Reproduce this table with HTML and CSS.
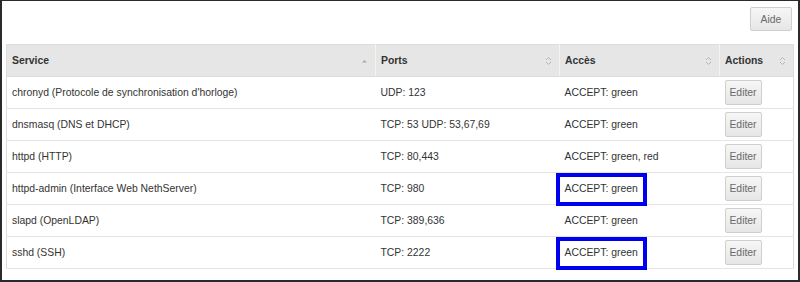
FILE: index.html
```html
<!DOCTYPE html>
<html lang="fr">
<head>
<meta charset="utf-8">
<title>Services réseau</title>
<link rel="stylesheet" href="styles.css">
</head>
<body>
<div class="frame">
  <div class="toolbar">
    <button class="btn btn-help">Aide</button>
  </div>
  <table class="grid">
    <colgroup>
      <col class="c-service">
      <col class="c-ports">
      <col class="c-acces">
      <col class="c-actions">
    </colgroup>
    <thead>
      <tr>
        <th><div class="th-in"><span>Service</span>
          <svg class="sort" width="7" height="10" viewBox="0 0 7 10"><path d="M1 6.5 L3.5 4 L6 6.5 Z" fill="#a8a8a8"/></svg></div></th>
        <th><div class="th-in"><span>Ports</span>
          <svg class="sort" width="7" height="10" viewBox="0 0 7 10"><path d="M1 4 L3.5 1.5 L6 4 M1 6 L3.5 8.5 L6 6" fill="none" stroke="#b4b4b4" stroke-width="1"/></svg></div></th>
        <th><div class="th-in"><span>Accès</span>
          <svg class="sort" width="7" height="10" viewBox="0 0 7 10"><path d="M1 4 L3.5 1.5 L6 4 M1 6 L3.5 8.5 L6 6" fill="none" stroke="#b4b4b4" stroke-width="1"/></svg></div></th>
        <th><div class="th-in"><span>Actions</span>
          <svg class="sort" width="7" height="10" viewBox="0 0 7 10"><path d="M1 4 L3.5 1.5 L6 4 M1 6 L3.5 8.5 L6 6" fill="none" stroke="#b4b4b4" stroke-width="1"/></svg></div></th>
      </tr>
    </thead>
    <tbody>
      <tr>
        <td>chronyd (Protocole de synchronisation d'horloge)</td>
        <td>UDP: 123</td>
        <td>ACCEPT: green</td>
        <td class="act"><button class="btn btn-edit">Editer</button></td>
      </tr>
      <tr>
        <td>dnsmasq (DNS et DHCP)</td>
        <td>TCP: 53 UDP: 53,67,69</td>
        <td>ACCEPT: green</td>
        <td class="act"><button class="btn btn-edit">Editer</button></td>
      </tr>
      <tr>
        <td>httpd (HTTP)</td>
        <td>TCP: 80,443</td>
        <td>ACCEPT: green, red</td>
        <td class="act"><button class="btn btn-edit">Editer</button></td>
      </tr>
      <tr>
        <td>httpd-admin (Interface Web NethServer)</td>
        <td>TCP: 980</td>
        <td><span class="mark">ACCEPT: green</span></td>
        <td class="act"><button class="btn btn-edit">Editer</button></td>
      </tr>
      <tr>
        <td>slapd (OpenLDAP)</td>
        <td>TCP: 389,636</td>
        <td>ACCEPT: green</td>
        <td class="act"><button class="btn btn-edit">Editer</button></td>
      </tr>
      <tr>
        <td>sshd (SSH)</td>
        <td>TCP: 2222</td>
        <td><span class="mark">ACCEPT: green</span></td>
        <td class="act"><button class="btn btn-edit">Editer</button></td>
      </tr>
    </tbody>
  </table>
</div>
</body>
</html>
```

FILE: styles.css
```css
* { box-sizing: border-box; }

html, body {
  margin: 0;
  padding: 0;
  background: #ffffff;
}

body {
  font-family: "Liberation Sans", Arial, sans-serif;
  font-size: 10.4px;
  color: #333333;
}

.frame {
  width: 800px;
  height: 282px;
  border-top: 1px solid #2a2a2a;
  border-left: 2px solid #2a2a2a;
  border-right: 2px solid #2a2a2a;
  border-bottom: 2px solid #2a2a2a;
  padding: 6px 5px 0 4px;
  background: #ffffff;
}

.toolbar {
  display: flex;
  justify-content: flex-end;
  padding-right: 1px;
  margin-bottom: 13px;
}

.btn {
  font-family: "Liberation Sans", Arial, sans-serif;
  font-size: 10.4px;
  color: #6a6a6a;
  background: linear-gradient(#f6f6f6, #e6e6e6);
  border: 1px solid #cfcfcf;
  border-radius: 2px;
  padding: 0;
  cursor: pointer;
}

.btn-help {
  width: 42px;
  height: 24px;
}

.grid {
  width: 787px;
  table-layout: fixed;
  border-collapse: collapse;
  border: 1px solid #dcdcdc;
}

.c-service { width: 369px; }
.c-ports { width: 184px; }
.c-acces { width: 160px; }
.c-actions { width: 74px; }

.grid th {
  height: 32px;
  background: #e6e6e6;
  border-left: 1px solid #f3f3f3;
  border-bottom: 1px solid #dcdcdc;
  padding: 0 7px 0 5px;
  text-align: left;
  font-weight: bold;
  color: #333333;
}

.grid th:first-child { border-left: none; }

.th-in {
  display: flex;
  align-items: center;
  justify-content: space-between;
}

.sort { flex: none; }

.grid td {
  height: 32px;
  padding: 0 5px;
  border-bottom: 1px solid #e4e4e4;
  white-space: nowrap;
  vertical-align: middle;
}

.grid td.act {
  padding: 0 0 1px 5px;
}

.btn-edit {
  width: 37px;
  height: 25px;
  display: block;
}

.mark {
  position: relative;
}

.mark::after {
  content: "";
  position: absolute;
  left: -9px;
  right: -9px;
  top: -10px;
  bottom: -12px;
  border: 4px solid #0000f0;
}
```
